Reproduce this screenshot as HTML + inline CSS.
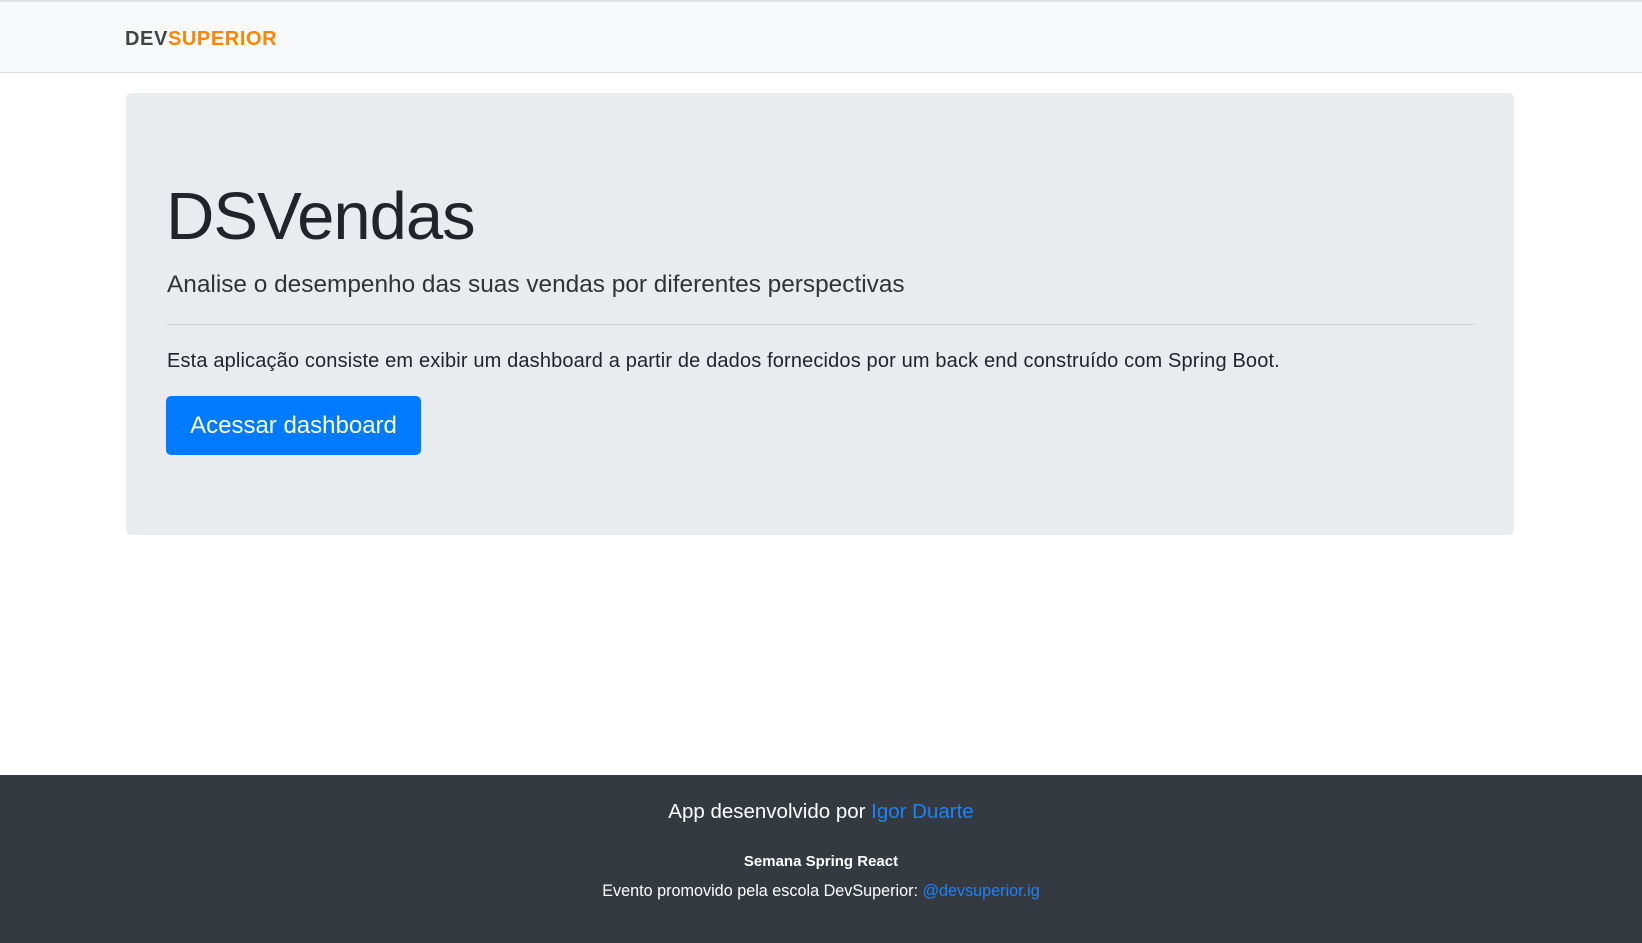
<!DOCTYPE html>
<html><head><meta charset="utf-8"><style>
*{margin:0;padding:0;box-sizing:border-box}
body{width:1642px;height:943px;position:relative;background:#fff;font-family:"Liberation Sans",sans-serif;overflow:hidden}
.nav{position:absolute;left:0;top:0;width:1642px;height:73px;background:#f8f9fa;border-top:2px solid #dee2e6;border-bottom:1px solid #dcdcdc}
.logo{position:absolute;left:125px;top:26px;font-weight:bold;font-size:20px;letter-spacing:0.6px;color:#444}
.logo span{color:#ff8400}
.jumbo{position:absolute;left:126px;top:93px;width:1388px;height:442px;background:#e9ecef;border-radius:5px}
h1{position:absolute;left:166px;top:177px;font-size:67px;font-weight:300;color:#212529;line-height:80px;letter-spacing:-1px}
.lead{position:absolute;left:167px;top:270px;font-size:24.4px;font-weight:300;color:#333;line-height:30px}
hr{position:absolute;left:167px;top:324px;width:1308px;border:0;border-top:1px solid #ccd0d4}
p.t{position:absolute;left:167px;top:349px;font-size:20px;color:#212529;line-height:24px;letter-spacing:0.15px}
.btn{position:absolute;left:166px;top:396px;width:255px;height:59px;background:#007bff;color:#fff;border-radius:5px;font-size:24px;line-height:59px;text-align:center}
.foot{position:absolute;left:0;top:775px;width:1642px;height:168px;background:#343a40;color:#fff;text-align:center}
.foot a{color:#1a82ff;text-decoration:none}
.f1{position:absolute;top:25px;width:100%;font-size:20.5px}
.f2{position:absolute;top:78px;width:100%;font-size:15px;font-weight:bold}
.f3{position:absolute;top:107px;width:100%;font-size:16.2px}
</style></head><body>
<div class="nav"><div class="logo">DEV<span>SUPERIOR</span></div></div>
<div class="jumbo"></div>
<h1>DSVendas</h1>
<div class="lead">Analise o desempenho das suas vendas por diferentes perspectivas</div>
<hr>
<p class="t">Esta aplicação consiste em exibir um dashboard a partir de dados fornecidos por um back end construído com Spring Boot.</p>
<div class="btn">Acessar dashboard</div>
<div class="foot">
<div class="f1">App desenvolvido por <a>Igor Duarte</a></div>
<div class="f2">Semana Spring React</div>
<div class="f3">Evento promovido pela escola DevSuperior: <a>@devsuperior.ig</a></div>
</div>
</body></html>
